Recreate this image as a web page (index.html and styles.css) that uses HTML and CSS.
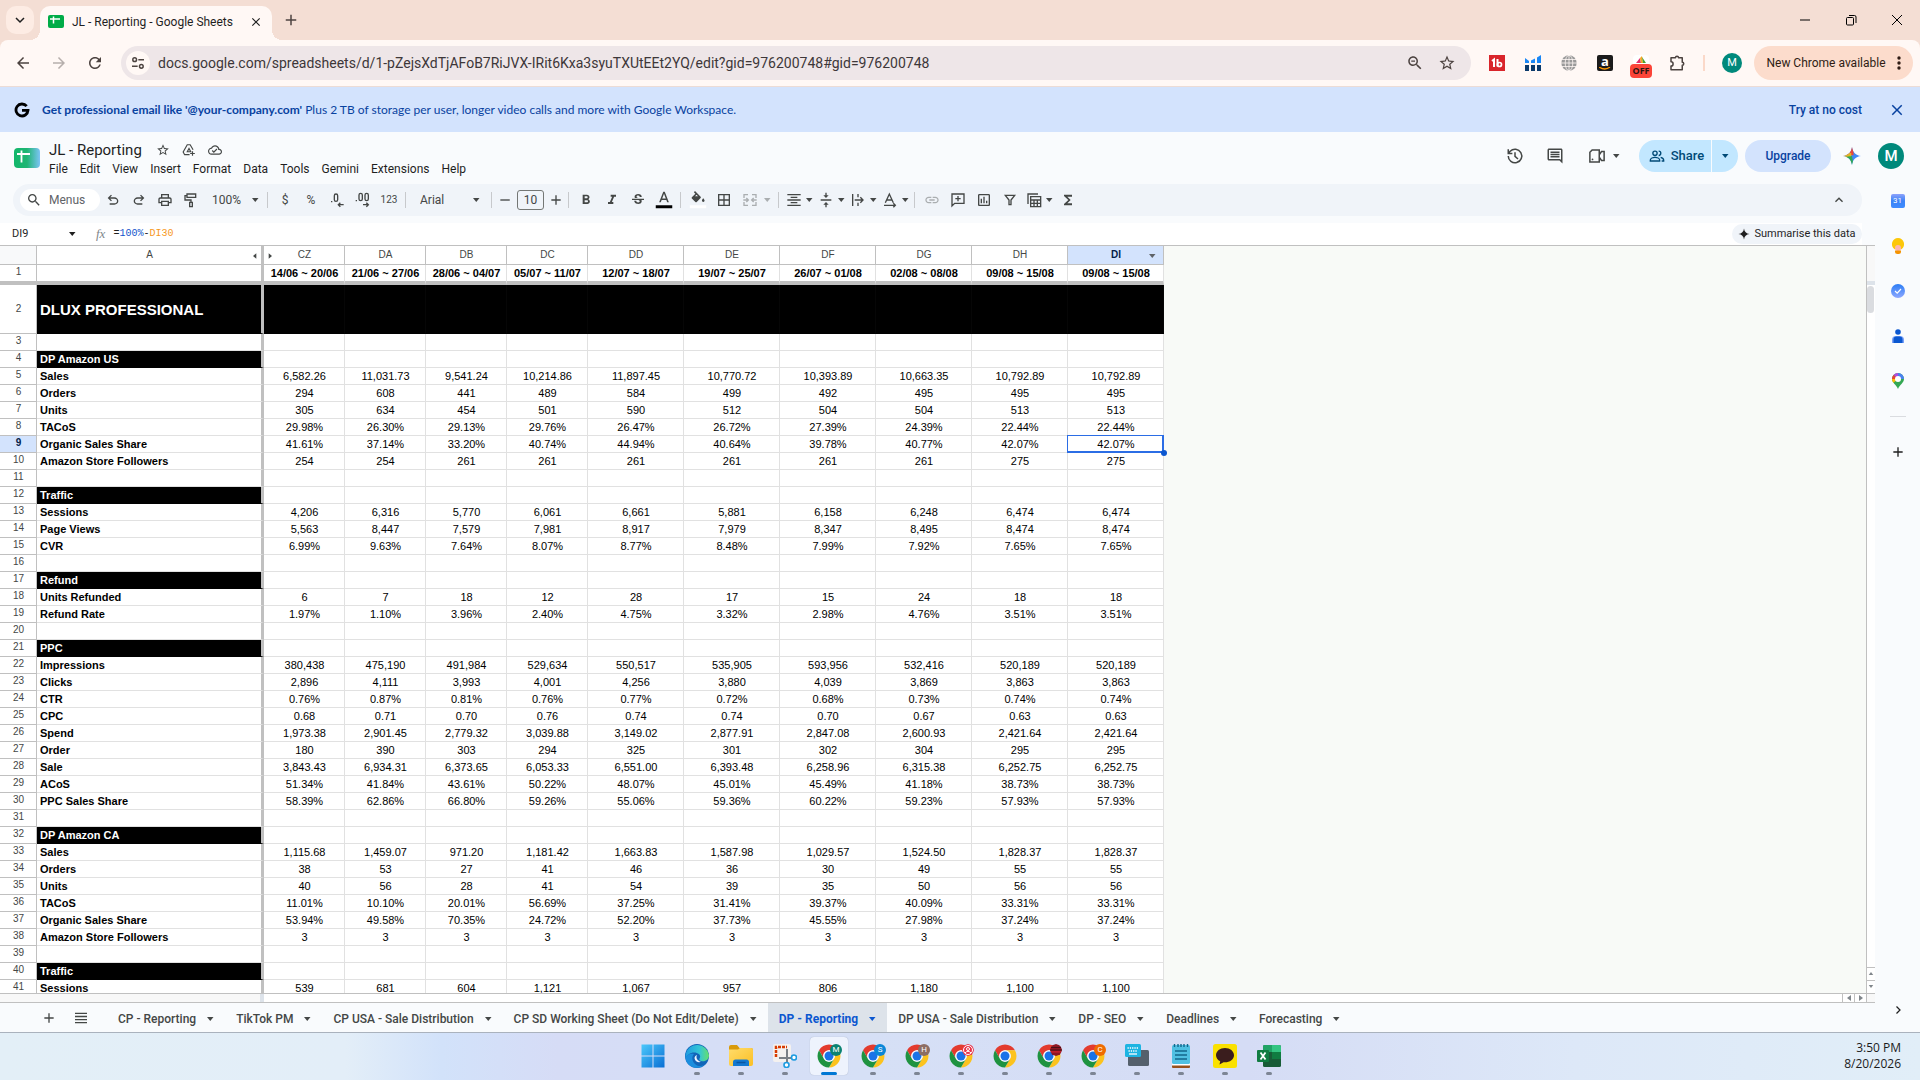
FILE: index.html
```html
<!DOCTYPE html>
<html lang="en">
<head>
<meta charset="utf-8">
<title>JL - Reporting - Google Sheets</title>
<link rel="stylesheet" href="styles.css">
</head>
<body>
<svg class="defs" aria-hidden="true">
  <defs>
    <linearGradient id="g-sheet" x1="0" x2="1"><stop offset="0" stop-color="#12b76a"/><stop offset=".5" stop-color="#1fb574"/><stop offset="1" stop-color="#7cc4f5"/></linearGradient>
    <linearGradient id="g-win" x1="0" y1="0" x2="1" y2="1"><stop offset="0" stop-color="#4cc8fb"/><stop offset="1" stop-color="#0a6fd4"/></linearGradient>
    <linearGradient id="g-edge" x1="0" y1="0" x2="1" y2="0"><stop offset="0" stop-color="#1f9be0"/><stop offset=".6" stop-color="#35c6d6"/><stop offset="1" stop-color="#67e06a"/></linearGradient>
    <linearGradient id="g-folder" x1="0" y1="0" x2="1" y2="1"><stop offset="0" stop-color="#ffdc6b"/><stop offset="1" stop-color="#fbbf24"/></linearGradient>
    <linearGradient id="g-blue" x1="0" y1="0" x2="0" y2="1"><stop offset="0" stop-color="#2b7df5"/><stop offset="1" stop-color="#8fa8ff"/></linearGradient>
    <linearGradient id="g-cal" x1="0" y1="0" x2="0" y2="1"><stop offset="0" stop-color="#8da2fb"/><stop offset=".5" stop-color="#3b82f6"/><stop offset="1" stop-color="#3f8cff"/></linearGradient>
  </defs>
  <symbol id="i-back" viewBox="0 0 24 24"><path d="M20 11H7.83l5.59-5.59L12 4l-8 8 8 8 1.41-1.41L7.83 13H20z"/></symbol>
  <symbol id="i-fwd" viewBox="0 0 24 24"><path d="M12 4l-1.41 1.41L16.17 11H4v2h12.17l-5.58 5.59L12 20l8-8z"/></symbol>
  <symbol id="i-reload" viewBox="0 0 24 24"><path d="M17.65 6.35C16.2 4.9 14.21 4 12 4c-4.42 0-7.99 3.58-7.99 8s3.57 8 7.99 8c3.73 0 6.84-2.55 7.73-6h-2.08c-.82 2.33-3.04 4-5.65 4-3.31 0-6-2.69-6-6s2.69-6 6-6c1.66 0 3.14.69 4.22 1.78L13 11h7V4z"/></symbol>
  <symbol id="i-star" viewBox="0 0 24 24"><path d="M22 9.24l-7.19-.62L12 2 9.19 8.63 2 9.24l5.46 4.73L5.82 21 12 17.27 18.18 21l-1.63-7.03zM12 15.4l-3.76 2.27 1-4.28-3.32-2.88 4.38-.38L12 6.1l1.71 4.04 4.38.38-3.32 2.88 1 4.28z"/></symbol>
  <symbol id="i-search" viewBox="0 0 24 24"><path d="M15.5 14h-.79l-.28-.27C15.41 12.59 16 11.11 16 9.5 16 5.91 13.09 3 9.5 3S3 5.91 3 9.5 5.91 16 9.5 16c1.61 0 3.09-.59 4.23-1.57l.27.28v.79l5 4.99L20.49 19zm-6 0C7.01 14 5 11.99 5 9.5S7.01 5 9.5 5 14 7.01 14 9.5 11.99 14 9.5 14z"/></symbol>
  <symbol id="i-zoomout" viewBox="0 0 24 24"><path d="M15.5 14h-.79l-.28-.27C15.41 12.59 16 11.11 16 9.5 16 5.91 13.09 3 9.5 3S3 5.91 3 9.5 5.91 16 9.5 16c1.61 0 3.09-.59 4.23-1.57l.27.28v.79l5 4.99L20.49 19zm-6 0C7.01 14 5 11.99 5 9.5S7.01 5 9.5 5 14 7.01 14 9.5 11.99 14 9.5 14zM7 8.700h5v1.600H7z"/></symbol>
  <symbol id="i-close" viewBox="0 0 24 24"><path d="M19 6.41L17.59 5 12 10.590 6.410 5 5 6.410 10.590 12 5 17.590 6.410 19 12 13.410 17.590 19 19 17.590 13.410 12z"/></symbol>
  <symbol id="i-plus" viewBox="0 0 24 24"><path d="M19 13h-6v6h-2v-6H5v-2h6V5h2v6h6z"/></symbol>
  <symbol id="i-minus" viewBox="0 0 24 24"><path d="M5 11h14v2H5z"/></symbol>
  <symbol id="i-menu" viewBox="0 0 24 24"><path d="M3 4h18v2H3zm0 4.700h18v2H3zm0 4.700h18v2H3zM3 18h18v2H3z"/></symbol>
  <symbol id="i-tune" viewBox="0 0 24 24"><g fill="none" stroke="currentColor" stroke-width="2.200"><circle cx="7" cy="7" r="2.800"/><path d="M12.500 7H21M3 17h8.500"/><circle cx="17" cy="17" r="2.800"/></g></symbol>
  <symbol id="i-undo" viewBox="0 0 24 24"><path d="M7 19v-2h7.100q1.575 0 2.737-1Q18 15 18 13.500T16.837 11Q15.675 10 14.100 10H7.800l2.600 2.600L9 14 4 9l5-5 1.400 1.400L7.800 8h6.300q2.425 0 4.163 1.575Q20 11.150 20 13.500t-1.737 3.925Q16.525 19 14.100 19Z"/></symbol>
  <symbol id="i-redo" viewBox="0 0 24 24"><path transform="translate(24 0) scale(-1 1)" d="M7 19v-2h7.100q1.575 0 2.737-1Q18 15 18 13.500T16.837 11Q15.675 10 14.100 10H7.800l2.600 2.600L9 14 4 9l5-5 1.400 1.400L7.800 8h6.300q2.425 0 4.163 1.575Q20 11.150 20 13.500t-1.737 3.925Q16.525 19 14.100 19Z"/></symbol>
  <symbol id="i-print" viewBox="0 0 24 24"><path fill-rule="evenodd" d="M19 8h-1V3H6v5H5c-1.660 0-3 1.340-3 3v6h4v4h12v-4h4v-6c0-1.660-1.340-3-3-3zM8 5h8v3H8V5zm8 12v2H8v-4h8v2zm2-2v-2H6v2H4v-4c0-.550.450-1 1-1h14c.550 0 1 .450 1 1v4h-2z"/></symbol>
  <symbol id="i-paint" viewBox="0 0 24 24"><g fill="none" stroke="currentColor" stroke-width="2"><path d="M6 3h13v5H6zM6 5.500H3V12h9v3.500M10 15.500h4V22h-4z"/></g></symbol>
  <symbol id="i-bold" viewBox="0 0 24 24"><path fill-rule="evenodd" d="M15.600 10.790c.970-.670 1.650-1.770 1.650-2.790 0-2.260-1.750-4-4-4H7v14h7.040c2.090 0 3.710-1.700 3.710-3.790 0-1.520-.860-2.820-2.150-3.420zM10 6.500h3c.830 0 1.500.670 1.500 1.500s-.670 1.500-1.500 1.500h-3v-3zm3.500 9H10v-3h3.500c.830 0 1.500.670 1.500 1.500s-.670 1.500-1.500 1.500z"/></symbol>
  <symbol id="i-italic" viewBox="0 0 24 24"><path d="M10 4v3h2.210l-3.420 8H6v3h8v-3h-2.210l3.420-8H18V4z"/></symbol>
  <symbol id="i-strike" viewBox="0 0 24 24"><path d="M6.850 7.080C6.850 4.370 9.450 3 12.240 3c1.640 0 3 .490 3.900 1.280.770.650 1.460 1.730 1.460 3.240h-3.010c0-.310-.050-.590-.150-.850-.290-.860-1.200-1.280-2.250-1.280-1.860 0-2.340 1.020-2.340 1.700 0 .480.250.880.740 1.210.380.250.770.480 1.410.700H7.390c-.210-.340-.540-.890-.540-1.920zM21 12v-2H3v2h9.620c1.150.450 1.960.750 1.960 1.970 0 1-.810 1.670-2.280 1.670-1.540 0-2.930-.540-2.930-2.510H6.400c0 .550.080 1.130.240 1.580.810 2.290 3.290 3.300 5.670 3.300 2.270 0 5.300-.890 5.300-4.050 0-.300-.010-1.160-.480-1.940H21z"/></symbol>
  <symbol id="i-color" viewBox="0 0 24 24"><path fill-rule="evenodd" d="M11 1L5.500 15h2.250l1.120-3h6.250l1.120 3h2.250L13 1h-2zm-1.380 9L12 3.670 14.380 10H9.620z"/><path fill="#000" d="M1 19h22v4H1z"/></symbol>
  <symbol id="i-fill" viewBox="0 0 24 24"><path fill-rule="evenodd" d="M15.500 7.500L8 0 6.500 1.500l2 2-4.700 4.700c-.500.500-.500 1.300 0 1.800l4.700 4.700c.500.500 1.300.500 1.800 0L15.500 9.300c.500-.500.500-1.300 0-1.800zM8 7l2-2 2 2zM19 9.500s-1.800 2-1.800 3.200a1.800 1.800 0 0 0 3.600 0c0-1.200-1.800-3.200-1.800-3.200z"/><path fill="#fff" d="M1 19h22v4H1z"/></symbol>
  <symbol id="i-borders" viewBox="0 0 24 24"><path fill-rule="evenodd" d="M3 3v18h18V3H3zm8 16H5v-6h6v6zm0-8H5V5h6v6zm8 8h-6v-6h6v6zm0-8h-6V5h6v6z"/></symbol>
  <symbol id="i-merge" viewBox="0 0 24 24"><g fill="none" stroke="currentColor" stroke-width="2"><path d="M9 4H3v5M15 4h6v5M9 20H3v-5M15 20h6v-5M2 12h7M15 12h7M6.500 9l3 3-3 3M17.500 9l-3 3 3 3"/></g></symbol>
  <symbol id="i-center" viewBox="0 0 24 24"><path d="M7 15v2h10v-2H7zm-5 6h20v-2H2v2zm0-8h20v-2H2v2zm5-6v2h10V7H7zM2 3v2h20V3H2z"/></symbol>
  <symbol id="i-middle" viewBox="0 0 24 24"><path d="M8 19h3v4h2v-4h3l-4-4zm8-14h-3V1h-2v4H8l4 4zM4 11v2h16v-2z"/></symbol>
  <symbol id="i-wrap" viewBox="0 0 24 24"><g fill="none" stroke="currentColor" stroke-width="2"><path d="M4 3v18M12 3v5M12 16v5M7 12h12M15.500 8l4 4-4 4"/></g></symbol>
  <symbol id="i-rotate" viewBox="0 0 24 24"><g fill="none" stroke="currentColor" stroke-width="2"><path d="M5 16l6-13 6 13M7.500 12h7M3 20h17M17 17l3 3-3 3"/></g></symbol>
  <symbol id="i-link" viewBox="0 0 24 24"><path d="M3.900 12c0-1.710 1.390-3.100 3.100-3.100h4V7H7c-2.760 0-5 2.240-5 5s2.240 5 5 5h4v-1.900H7c-1.710 0-3.100-1.390-3.100-3.100zM8 13h8v-2H8zm9-6h-4v1.900h4c1.710 0 3.100 1.390 3.100 3.100s-1.390 3.100-3.100 3.100h-4V17h4c2.760 0 5-2.240 5-5s-2.240-5-5-5z"/></symbol>
  <symbol id="i-addcomment" viewBox="0 0 24 24"><path fill="none" stroke="currentColor" stroke-width="2" d="M3 21V3h18v14H7zM12 6v8M8 10h8"/></symbol>
  <symbol id="i-chart" viewBox="0 0 24 24"><path fill-rule="evenodd" d="M19 3H5c-1.100 0-2 .900-2 2v14c0 1.100.900 2 2 2h14c1.100 0 2-.900 2-2V5c0-1.100-.900-2-2-2zm0 16H5V5h14v14zM7 10h2v7H7zm4-3h2v10h-2zm4 6h2v4h-2z"/></symbol>
  <symbol id="i-filter" viewBox="0 0 24 24"><path fill="none" stroke="currentColor" stroke-width="2" d="M5 5h14l-5.500 7v7h-3v-7z"/></symbol>
  <symbol id="i-views" viewBox="0 0 24 24"><g fill="none" stroke="currentColor" stroke-width="2"><path d="M3 18V3h15"/><path d="M7 7h15v15H7zM7 12h15M7 17h15M12 12v10M17 12v10"/></g></symbol>
  <symbol id="i-sum" viewBox="0 0 24 24"><path d="M18 4H6v2l6.500 6L6 18v2h12v-3h-7l5-5-5-5h7z"/></symbol>
  <symbol id="i-up" viewBox="0 0 24 24"><path d="M12 8l-6 6 1.410 1.410L12 10.830l4.590 4.580L18 14z"/></symbol>
  <symbol id="i-down" viewBox="0 0 24 24"><path fill="none" stroke="currentColor" stroke-width="3" d="M4 8l8 8 8-8"/></symbol>
  <symbol id="i-right" viewBox="0 0 24 24"><path fill="none" stroke="currentColor" stroke-width="2.500" d="M9 5l7 7-7 7"/></symbol>
  <symbol id="i-drop" viewBox="0 0 8 8"><path d="M1 2h6.500L4.250 6z"/></symbol>
  <symbol id="i-dec0" viewBox="0 0 24 24"><g fill="none" stroke="currentColor" stroke-width="2"><rect x="8" y="3" width="5" height="11" rx="2.500"/><path d="M3 14.500h2M22 19h-8M17 16l-3 3 3 3"/></g></symbol>
  <symbol id="i-dec00" viewBox="0 0 24 24"><g fill="none" stroke="currentColor" stroke-width="2"><rect x="6" y="2" width="5" height="11" rx="2.500"/><rect x="15" y="2" width="5" height="11" rx="2.500"/><path d="M1 13h2M12 19h8M17 16l3 3-3 3"/></g></symbol>
  <symbol id="i-history" viewBox="0 0 24 24"><path fill="none" stroke="currentColor" stroke-width="2" d="M3 12a9 9 0 1 0 2.600-6.300L3 8.500M3 3v5.500h5.500M12 7v5.500l4 3.500"/></symbol>
  <symbol id="i-comment" viewBox="0 0 24 24"><path fill-rule="evenodd" d="M21.990 4c0-1.100-.890-2-1.990-2H4c-1.100 0-2 .900-2 2v12c0 1.100.900 2 2 2h14l4 4zM20 4v13.170L18.830 16H4V4zM6 12h12v2H6zm0-3h12v2H6zm0-3h12v2H6z"/></symbol>
  <symbol id="i-video" viewBox="0 0 24 24"><path fill="none" stroke="currentColor" stroke-width="2" d="M5.500 4H15v16H2.500V7zM15 10.500l3-4.500h3.500v12H18l-3-4.500"/><circle cx="6" cy="16.500" r="1.200"/></symbol>
  <symbol id="i-people" viewBox="0 0 24 24"><g fill="none" stroke="currentColor" stroke-width="2"><circle cx="9" cy="8" r="3.200"/><path d="M2 19.500v-1.500c0-2.500 4-4 7-4s7 1.500 7 4v1.500zM14.500 4.800a3.200 3.200 0 0 1 0 6.400M17.500 14.200c2.500.800 4.500 2 4.500 3.800v1.500h-3"/></g></symbol>
  <symbol id="i-drive" viewBox="0 0 24 24"><path fill="none" stroke="currentColor" stroke-width="2" d="M13 20H4.500L2 15.500 9 3h5l5 8.500M9 15l3-5.500 3 5.500zM18 14v8M14 18h8"/></symbol>
  <symbol id="i-cloud" viewBox="0 0 24 24"><path fill-rule="evenodd" d="M19.350 10.040C18.670 6.590 15.640 4 12 4 9.110 4 6.600 5.640 5.350 8.040 2.340 8.360 0 10.910 0 14c0 3.310 2.690 6 6 6h13c2.760 0 5-2.240 5-5 0-2.640-2.050-4.780-4.650-4.960zM19 18H6c-2.210 0-4-1.790-4-4s1.790-4 4-4h.710C7.370 7.690 9.480 6 12 6c3.040 0 5.500 2.460 5.500 5.500v.500H19c1.660 0 3 1.340 3 3s-1.340 3-3 3zm-9-3.820l-2.090-2.090L6.500 13.500 10 17l6.010-6.010-1.410-1.410z"/></symbol>
  <symbol id="i-puzzle" viewBox="0 0 24 24"><path fill="none" stroke="currentColor" stroke-width="2" stroke-linejoin="round" d="M4 5h6a2 2 0 0 1 4 0h5v6a2 2 0 0 1 0 4v6H4v-5a2.800 2.800 0 0 0 0-5.600z"/></symbol>
  <symbol id="i-spark" viewBox="0 0 24 24"><path d="M12 1c.800 6.500 4.500 10.200 11 11-6.500.800-10.200 4.500-11 11-.800-6.500-4.500-10.200-11-11 6.500-.800 10.200-4.500 11-11z"/></symbol>
  <symbol id="i-g" viewBox="0 0 24 24"><path fill="none" stroke="#000" stroke-width="4.200" d="M19 6.300A9 9 0 1 0 21 12.500h-9"/></symbol>
  <symbol id="i-chrome" viewBox="0 0 48 48">
    <path fill="#e33b2e" d="M4.100 12.500A23 23 0 0 1 43.900 12.500L24 12.500A11.500 11.500 0 0 0 14.040 29.750Z"/>
    <path fill="#fcc31e" d="M43.900 12.500A23 23 0 0 1 24 47L33.960 29.750A11.500 11.500 0 0 0 24 12.500Z"/>
    <path fill="#1f9340" d="M24 47A23 23 0 0 1 4.100 12.500L14.040 29.750A11.500 11.500 0 0 0 33.960 29.750Z"/>
    <circle cx="24" cy="24" r="11.500" fill="#fff"/><circle cx="24" cy="24" r="9" fill="#1a73e8"/>
  </symbol>
</svg>

<header class="browser">
  <div class="tabstrip">
    <button class="tab-search" aria-label="Search tabs"><svg class="s12"><use href="#i-down"/></svg></button>
    <div class="browser-tab">
      <svg class="s16" viewBox="0 0 16 16"><rect y="1" width="16" height="13" rx="2" fill="#00ac47"/><path d="M2 5h10M5.500 2.500v7" stroke="#fff" stroke-width="1.500"/></svg>
      <span class="browser-title">JL - Reporting - Google Sheets</span>
      <button class="tab-close" aria-label="Close tab"><svg class="s14"><use href="#i-close"/></svg></button>
    </div>
    <button class="new-tab" aria-label="New tab"><svg class="s18"><use href="#i-plus"/></svg></button>
    <div class="window-controls">
      <button aria-label="Minimize"><svg class="s12" viewBox="0 0 12 12"><path d="M1 6h10" stroke="#000"/></svg></button>
      <button aria-label="Restore"><svg class="s12 line" viewBox="0 0 12 12" stroke="#000"><rect x="1.500" y="3.500" width="7" height="7.500" rx="1"/><path d="M4 1.500h5.500a1.500 1.500 0 0 1 1.500 1.500v6"/></svg></button>
      <button aria-label="Close"><svg class="s12" viewBox="0 0 12 12"><path d="M1 1l10 10M11 1L1 11" stroke="#000"/></svg></button>
    </div>
  </div>
  <div class="navbar">
    <button class="nav-btn" aria-label="Back"><svg class="s18"><use href="#i-back"/></svg></button>
    <button class="nav-btn faded" aria-label="Forward"><svg class="s18"><use href="#i-fwd"/></svg></button>
    <button class="nav-btn" aria-label="Reload"><svg class="s18"><use href="#i-reload"/></svg></button>
    <div class="omnibox">
      <button class="site-info" aria-label="Site information"><svg class="s16"><use href="#i-tune"/></svg></button>
      <input class="url" aria-label="Address" value="docs.google.com/spreadsheets/d/1-pZejsXdTjAFoB7RiJVX-IRit6Kxa3syuTXUtEEt2YQ/edit?gid=976200748#gid=976200748">
      <button class="omni-btn" aria-label="Zoom"><svg class="s18"><use href="#i-zoomout"/></svg></button>
      <button class="omni-btn" aria-label="Bookmark"><svg class="s18"><use href="#i-star"/></svg></button>
    </div>
    <div class="extensions">
      <button aria-label="Extension 1b"><svg class="s16 line" viewBox="0 0 16 16"><rect width="16" height="16" fill="#d9252b"/><path d="M3 6l2-1.500V12M8.500 4v7.500" stroke="#fff" stroke-width="2"/><circle cx="10.500" cy="9.500" r="2" stroke="#fff" stroke-width="1.700"/></svg></button>
      <button aria-label="Analytics extension"><svg class="s16" viewBox="0 0 16 16"><path fill="#1a87f5" d="M0 3l4 3v2H0zM6 5.500l4-2V8H6zM12 2.500L16 0v8h-4z"/><path fill="#0b3a6b" d="M0 10h4v6H0zM6 10h4v6H6zM12 10h4v6h-4z"/></svg></button>
      <button aria-label="Globe extension"><svg class="s16 line" viewBox="0 0 16 16" stroke="#fff8f5" stroke-width=".8"><circle cx="8" cy="8" r="7.700" fill="#9a9a9a" stroke="none"/><ellipse cx="8" cy="8" rx="3.800" ry="7.700"/><path d="M8 0v16M0 8h16M1 4.500h14M1 11.500h14"/></svg></button>
      <button aria-label="Amazon extension" class="amz"><span>a</span><svg viewBox="0 0 12 3"><path d="M0 0q6 4 11 0" fill="none" stroke="#f90" stroke-width="1.300"/></svg></button>
      <button aria-label="Helper extension" class="helper"><svg class="s16" viewBox="0 0 16 16"><rect width="16" height="12" rx="4" fill="#fff"/><path d="M3 8l4-5 1 5z" fill="#e1306c"/><path d="M7 3l2-2 1 7H8z" fill="#f5a623"/><path d="M9 2l4 6h-3z" fill="#4a9e2f"/></svg><span class="off">OFF</span></button>
      <button aria-label="Extensions"><svg class="s18"><use href="#i-puzzle"/></svg></button>
    </div>
    <span class="nav-sep"></span>
    <button class="avatar small" aria-label="Profile">M</button>
    <button class="update">New Chrome available <svg class="dots" viewBox="0 0 4 14"><circle cx="2" cy="2" r="1.700"/><circle cx="2" cy="7" r="1.700"/><circle cx="2" cy="12" r="1.700"/></svg></button>
  </div>
</header>

<aside class="promo">
  <svg class="s16"><use href="#i-g"/></svg>
  <p><b>Get professional email like '@your-company.com'</b> Plus 2 TB of storage per user, longer video calls and more with Google Workspace.</p>
  <a href="#trial">Try at no cost</a>
  <button aria-label="Dismiss"><svg class="s18"><use href="#i-close"/></svg></button>
</aside>

<div class="dochead">
  <svg class="logo" viewBox="0 0 26 20"><rect width="26" height="20" rx="4" fill="url(#g-sheet)"/><path d="M3 6h13M7.500 2.500v12" stroke="#fff" stroke-width="1.800"/></svg>
  <div class="doc-info">
    <div class="title-row">
      <h1>JL - Reporting</h1>
      <button aria-label="Star"><svg class="s14"><use href="#i-star"/></svg></button>
      <button aria-label="Add to Drive"><svg class="s14"><use href="#i-drive"/></svg></button>
      <button aria-label="Saved"><svg class="s14"><use href="#i-cloud"/></svg></button>
    </div>
    <nav class="menus"><button>File</button><button>Edit</button><button>View</button><button>Insert</button><button>Format</button><button>Data</button><button>Tools</button><button>Gemini</button><button>Extensions</button><button>Help</button></nav>
  </div>
  <div class="doc-actions">
    <button class="act" aria-label="Version history"><svg class="s18"><use href="#i-history"/></svg></button>
    <button class="act" aria-label="Comments"><svg class="s18"><use href="#i-comment"/></svg></button>
    <button class="act meet" aria-label="Meet"><svg class="s18"><use href="#i-video"/></svg><svg class="s8"><use href="#i-drop"/></svg></button>
    <div class="share"><button class="share-main"><svg class="s16"><use href="#i-people"/></svg>Share</button><button class="share-more" aria-label="Share options"><svg class="s8"><use href="#i-drop"/></svg></button></div>
    <button class="upgrade">Upgrade</button>
    <button class="gem" aria-label="Gemini"><svg class="spark-box" viewBox="0 0 24 24"><defs><clipPath id="spark-clip"><path d="M12 0c.900 7 5 11.100 12 12-7 .900-11.100 5-12 12-.900-7-5-11.100-12-12 7-.900 11.100-5 12-12z"/></clipPath></defs><g clip-path="url(#spark-clip)"><path fill="#3f87f5" d="M0 0h24v24H0z"/><path fill="#e5483b" d="M0 0h14v11H0z"/><path fill="#e3b325" d="M0 8h11v6H0z"/><path fill="#30a853" d="M4 13l8-1 2 12H4z"/></g></svg></button>
    <button class="avatar large" aria-label="Account">M</button>
  </div>
</div>

<div class="workspace">
  <main class="editor">
    <div class="toolbar">
      <label class="finder"><svg class="s16"><use href="#i-search"/></svg><input placeholder="Menus" aria-label="Menus"></label>
      <button aria-label="Undo"><svg class="s16"><use href="#i-undo"/></svg></button>
      <button aria-label="Redo"><svg class="s16"><use href="#i-redo"/></svg></button>
      <button aria-label="Print"><svg class="s16"><use href="#i-print"/></svg></button>
      <button aria-label="Paint format"><svg class="s16"><use href="#i-paint"/></svg></button>
      <label class="pick zoom"><select aria-label="Zoom"><option>100%</option></select><svg class="s8"><use href="#i-drop"/></svg></label>
      <i class="sep"></i>
      <button aria-label="Currency">$</button>
      <button aria-label="Percent">%</button>
      <button aria-label="Fewer decimals"><svg class="s16"><use href="#i-dec0"/></svg></button>
      <button aria-label="More decimals"><svg class="s16"><use href="#i-dec00"/></svg></button>
      <button aria-label="Formats" class="digits">123</button>
      <i class="sep"></i>
      <label class="pick font"><select aria-label="Font"><option>Arial</option></select><svg class="s8"><use href="#i-drop"/></svg></label>
      <i class="sep"></i>
      <button class="step" aria-label="Smaller"><svg class="s16"><use href="#i-minus"/></svg></button>
      <input class="size" aria-label="Font size" value="10">
      <button class="step" aria-label="Larger"><svg class="s16"><use href="#i-plus"/></svg></button>
      <i class="sep"></i>
      <button aria-label="Bold"><svg class="s16"><use href="#i-bold"/></svg></button>
      <button aria-label="Italic"><svg class="s16"><use href="#i-italic"/></svg></button>
      <button aria-label="Strikethrough"><svg class="s16"><use href="#i-strike"/></svg></button>
      <button aria-label="Text colour"><svg class="s18"><use href="#i-color"/></svg></button>
      <i class="sep"></i>
      <button aria-label="Fill colour"><svg class="s18"><use href="#i-fill"/></svg></button>
      <button aria-label="Borders"><svg class="s16"><use href="#i-borders"/></svg></button>
      <button class="merge faded" aria-label="Merge cells"><svg class="s16"><use href="#i-merge"/></svg><svg class="s8"><use href="#i-drop"/></svg></button>
      <i class="sep"></i>
      <button class="combo" aria-label="Horizontal align"><svg class="s16"><use href="#i-center"/></svg><svg class="s8"><use href="#i-drop"/></svg></button>
      <button class="combo" aria-label="Vertical align"><svg class="s16"><use href="#i-middle"/></svg><svg class="s8"><use href="#i-drop"/></svg></button>
      <button class="combo" aria-label="Wrapping"><svg class="s16"><use href="#i-wrap"/></svg><svg class="s8"><use href="#i-drop"/></svg></button>
      <button class="combo" aria-label="Rotation"><svg class="s16"><use href="#i-rotate"/></svg><svg class="s8"><use href="#i-drop"/></svg></button>
      <i class="sep"></i>
      <button class="faded" aria-label="Insert link"><svg class="s16"><use href="#i-link"/></svg></button>
      <button aria-label="Insert comment"><svg class="s16"><use href="#i-addcomment"/></svg></button>
      <button aria-label="Insert chart"><svg class="s16"><use href="#i-chart"/></svg></button>
      <button aria-label="Filter"><svg class="s16"><use href="#i-filter"/></svg></button>
      <button class="combo" aria-label="Table views"><svg class="s16"><use href="#i-views"/></svg><svg class="s8"><use href="#i-drop"/></svg></button>
      <button aria-label="Functions"><svg class="s16"><use href="#i-sum"/></svg></button>
      <button class="collapse" aria-label="Hide the menus"><svg class="s16"><use href="#i-up"/></svg></button>
    </div>

    <div class="formula-bar">
      <input class="namebox" aria-label="Name box" value="DI9">
      <svg class="s8"><use href="#i-drop"/></svg>
      <span class="fx">fx</span>
      <div class="formula" role="textbox" aria-label="Formula" contenteditable="true" spellcheck="false">=<span class="num">100%</span>-<span class="ref">DI30</span></div>
      <button class="summarise"><svg class="s12"><use href="#i-spark"/></svg>Summarise this data</button>
    </div>

    <div class="sheet">
      <div class="viewport">
        <table class="grid">
          <colgroup><col class="c-num"><col class="c-a"><col class="c-s" span="4"><col class="c-l" span="6"></colgroup>
          <thead><tr><th class="corner"><th class="hide-left">A<svg class="s6" viewBox="0 0 6 8"><path d="M5 0v8L0 4z"/></svg><th class="hide-right"><svg class="s6" viewBox="0 0 6 8"><path d="M1 0v8l5-4z"/></svg>CZ<th>DA<th>DB<th>DC<th>DD<th>DE<th>DF<th>DG<th>DH<th class="on">DI<svg class="s8"><use href="#i-drop"/></svg></thead>
          <tbody>
            <tr class="frozen"><th>1<td><td>14/06 ~ 20/06<td>21/06 ~ 27/06<td>28/06 ~ 04/07<td>05/07 ~ 11/07<td>12/07 ~ 18/07<td>19/07 ~ 25/07<td>26/07 ~ 01/08<td>02/08 ~ 08/08<td>09/08 ~ 15/08<td>09/08 ~ 15/08
            <tr class="brand"><th>2<td>DLUX PROFESSIONAL<td><td><td><td><td><td><td><td><td><td>
            <tr><th>3<td><td><td><td><td><td><td><td><td><td><td>
            <tr class="section"><th>4<td>DP Amazon US<td><td><td><td><td><td><td><td><td><td>
            <tr><th>5<td>Sales<td>6,582.26<td>11,031.73<td>9,541.24<td>10,214.86<td>11,897.45<td>10,770.72<td>10,393.89<td>10,663.35<td>10,792.89<td>10,792.89
            <tr><th>6<td>Orders<td>294<td>608<td>441<td>489<td>584<td>499<td>492<td>495<td>495<td>495
            <tr><th>7<td>Units<td>305<td>634<td>454<td>501<td>590<td>512<td>504<td>504<td>513<td>513
            <tr><th>8<td>TACoS<td>29.98%<td>26.30%<td>29.13%<td>29.76%<td>26.47%<td>26.72%<td>27.39%<td>24.39%<td>22.44%<td>22.44%
            <tr><th class="on">9<td>Organic Sales Share<td>41.61%<td>37.14%<td>33.20%<td>40.74%<td>44.94%<td>40.64%<td>39.78%<td>40.77%<td>42.07%<td class="active">42.07%
            <tr><th>10<td>Amazon Store Followers<td>254<td>254<td>261<td>261<td>261<td>261<td>261<td>261<td>275<td>275
            <tr><th>11<td><td><td><td><td><td><td><td><td><td><td>
            <tr class="section"><th>12<td>Traffic<td><td><td><td><td><td><td><td><td><td>
            <tr><th>13<td>Sessions<td>4,206<td>6,316<td>5,770<td>6,061<td>6,661<td>5,881<td>6,158<td>6,248<td>6,474<td>6,474
            <tr><th>14<td>Page Views<td>5,563<td>8,447<td>7,579<td>7,981<td>8,917<td>7,979<td>8,347<td>8,495<td>8,474<td>8,474
            <tr><th>15<td>CVR<td>6.99%<td>9.63%<td>7.64%<td>8.07%<td>8.77%<td>8.48%<td>7.99%<td>7.92%<td>7.65%<td>7.65%
            <tr><th>16<td><td><td><td><td><td><td><td><td><td><td>
            <tr class="section"><th>17<td>Refund<td><td><td><td><td><td><td><td><td><td>
            <tr><th>18<td>Units Refunded<td>6<td>7<td>18<td>12<td>28<td>17<td>15<td>24<td>18<td>18
            <tr><th>19<td>Refund Rate<td>1.97%<td>1.10%<td>3.96%<td>2.40%<td>4.75%<td>3.32%<td>2.98%<td>4.76%<td>3.51%<td>3.51%
            <tr><th>20<td><td><td><td><td><td><td><td><td><td><td>
            <tr class="section"><th>21<td>PPC<td><td><td><td><td><td><td><td><td><td>
            <tr><th>22<td>Impressions<td>380,438<td>475,190<td>491,984<td>529,634<td>550,517<td>535,905<td>593,956<td>532,416<td>520,189<td>520,189
            <tr><th>23<td>Clicks<td>2,896<td>4,111<td>3,993<td>4,001<td>4,256<td>3,880<td>4,039<td>3,869<td>3,863<td>3,863
            <tr><th>24<td>CTR<td>0.76%<td>0.87%<td>0.81%<td>0.76%<td>0.77%<td>0.72%<td>0.68%<td>0.73%<td>0.74%<td>0.74%
            <tr><th>25<td>CPC<td>0.68<td>0.71<td>0.70<td>0.76<td>0.74<td>0.74<td>0.70<td>0.67<td>0.63<td>0.63
            <tr><th>26<td>Spend<td>1,973.38<td>2,901.45<td>2,779.32<td>3,039.88<td>3,149.02<td>2,877.91<td>2,847.08<td>2,600.93<td>2,421.64<td>2,421.64
            <tr><th>27<td>Order<td>180<td>390<td>303<td>294<td>325<td>301<td>302<td>304<td>295<td>295
            <tr><th>28<td>Sale<td>3,843.43<td>6,934.31<td>6,373.65<td>6,053.33<td>6,551.00<td>6,393.48<td>6,258.96<td>6,315.38<td>6,252.75<td>6,252.75
            <tr><th>29<td>ACoS<td>51.34%<td>41.84%<td>43.61%<td>50.22%<td>48.07%<td>45.01%<td>45.49%<td>41.18%<td>38.73%<td>38.73%
            <tr><th>30<td>PPC Sales Share<td>58.39%<td>62.86%<td>66.80%<td>59.26%<td>55.06%<td>59.36%<td>60.22%<td>59.23%<td>57.93%<td>57.93%
            <tr><th>31<td><td><td><td><td><td><td><td><td><td><td>
            <tr class="section"><th>32<td>DP Amazon CA<td><td><td><td><td><td><td><td><td><td>
            <tr><th>33<td>Sales<td>1,115.68<td>1,459.07<td>971.20<td>1,181.42<td>1,663.83<td>1,587.98<td>1,029.57<td>1,524.50<td>1,828.37<td>1,828.37
            <tr><th>34<td>Orders<td>38<td>53<td>27<td>41<td>46<td>36<td>30<td>49<td>55<td>55
            <tr><th>35<td>Units<td>40<td>56<td>28<td>41<td>54<td>39<td>35<td>50<td>56<td>56
            <tr><th>36<td>TACoS<td>11.01%<td>10.10%<td>20.01%<td>56.69%<td>37.25%<td>31.41%<td>39.37%<td>40.09%<td>33.31%<td>33.31%
            <tr><th>37<td>Organic Sales Share<td>53.94%<td>49.58%<td>70.35%<td>24.72%<td>52.20%<td>37.73%<td>45.55%<td>27.98%<td>37.24%<td>37.24%
            <tr><th>38<td>Amazon Store Followers<td>3<td>3<td>3<td>3<td>3<td>3<td>3<td>3<td>3<td>3
            <tr><th>39<td><td><td><td><td><td><td><td><td><td><td>
            <tr class="section"><th>40<td>Traffic<td><td><td><td><td><td><td><td><td><td>
            <tr><th>41<td>Sessions<td>539<td>681<td>604<td>1,121<td>1,067<td>957<td>806<td>1,180<td>1,100<td>1,100
          </tbody>
        </table>
      </div>
      <div class="vscroll"><div class="vfrozen"></div><div class="vthumb"></div><div class="varrows"><svg viewBox="0 0 6 4"><path d="M0 4h6L3 0z"/></svg><svg viewBox="0 0 6 4"><path d="M0 0h6L3 4z"/></svg></div></div>
      <div class="hscroll"><div class="hfrozen"></div><div class="htrack"></div><div class="harrows"><svg viewBox="0 0 4 6"><path d="M4 0v6L0 3z"/></svg><svg viewBox="0 0 4 6"><path d="M0 0v6l4-3z"/></svg></div></div>
      <div class="scroll-corner"></div>
    </div>
    <nav class="sheet-tabs">
      <button class="tool" aria-label="Add sheet"><svg class="s16"><use href="#i-plus"/></svg></button>
      <button class="tool" aria-label="All sheets"><svg class="s16"><use href="#i-menu"/></svg></button>
      <div class="tabs">
        <button>CP - Reporting<svg class="s8"><use href="#i-drop"/></svg></button>
        <button>TikTok PM<svg class="s8"><use href="#i-drop"/></svg></button>
        <button>CP USA - Sale Distribution<svg class="s8"><use href="#i-drop"/></svg></button>
        <button>CP SD Working Sheet (Do Not Edit/Delete)<svg class="s8"><use href="#i-drop"/></svg></button>
        <button class="current">DP - Reporting<svg class="s8"><use href="#i-drop"/></svg></button>
        <button>DP USA - Sale Distribution<svg class="s8"><use href="#i-drop"/></svg></button>
        <button>DP - SEO<svg class="s8"><use href="#i-drop"/></svg></button>
        <button>Deadlines<svg class="s8"><use href="#i-drop"/></svg></button>
        <button>Forecasting<svg class="s8"><use href="#i-drop"/></svg></button>
      </div>
    </nav>
  </main>

  <aside class="side-panel">
    <button aria-label="Calendar" class="cal"><svg class="s14" viewBox="0 0 14 14"><rect width="14" height="14" rx="2" fill="url(#g-cal)"/></svg><span>31</span></button>
    <button aria-label="Keep"><svg class="s16" viewBox="0 0 16 16"><path d="M8 0a6.200 6.200 0 0 0-3.500 11.200h7A6.200 6.200 0 0 0 8 0z" fill="#fcc70a"/><circle cx="8" cy="10" r="3" fill="#fcb5b0"/><path d="M5 12.500h6v1A2.500 2.500 0 0 1 8.500 16h-1A2.500 2.500 0 0 1 5 13.500z" fill="#f59300"/></svg></button>
    <button aria-label="Tasks"><svg class="s14" viewBox="0 0 14 14"><circle cx="7" cy="7" r="7" fill="url(#g-blue)"/><path d="M4 7l2.200 2.200L10 5" fill="none" stroke="#fff" stroke-width="1.200"/></svg></button>
    <button aria-label="Contacts"><svg class="s14" viewBox="0 0 14 14"><circle cx="7" cy="3" r="2.800" fill="#0b57d0"/><path d="M1 14v-3a4 4 0 0 1 4-4h4a4 4 0 0 1 4 4v3z" fill="#7aa0f7"/><path d="M2.500 14v-3.500a3 3 0 0 1 3-3h3a3 3 0 0 1 3 3V14z" fill="#0b57d0"/></svg></button>
    <button aria-label="Maps"><svg class="s16" viewBox="0 0 16 16"><path d="M8 0a6 6 0 0 0-6 6c0 4 4 5 6 10 2-5 6-6 6-10a6 6 0 0 0-6-6z" fill="#34a853"/><path d="M8 0a6 6 0 0 1 6 6l-6 0z" fill="#4a80f0"/><path d="M8 0a6 6 0 0 0-4.500 2L8 6z" fill="#b04be0"/><path d="M3.500 2A6 6 0 0 0 2 6l6 0z" fill="#ea4335"/><path d="M2 6c0 1.500.500 2.600 1.400 3.700L8 6z" fill="#fbbc04"/><circle cx="8" cy="6" r="3" fill="#fff"/></svg></button>
    <hr>
    <button aria-label="Get add-ons"><svg class="s16"><use href="#i-plus"/></svg></button>
    <button class="panel-toggle" aria-label="Hide side panel"><svg class="s12"><use href="#i-right"/></svg></button>
  </aside>
</div>

<footer class="taskbar">
  <div class="apps">
    <button aria-label="Start"><svg class="s24" viewBox="0 0 24 24"><path fill="url(#g-win)" d="M.500.500h11v11H.500zM12.500.500h11v11h-11zM.500 12.500h11v11H.500zM12.500 12.500h11v11h-11z"/></svg></button>
    <button class="open" aria-label="Edge"><svg class="s24" viewBox="0 0 24 24"><circle cx="12" cy="12" r="12" fill="#1265b8"/><path d="M.500 10A12 12 0 0 1 24 11c0 5-4 7-8 6-2-.500-2-2-1-3.500C16 11 13 8.500 9 8.500S2 11 .500 15z" fill="url(#g-edge)"/><path d="M9 10c-3 3-2 9 3 11.500 4 1.500 7 0 9-2.500A12 12 0 0 1 9 23.500C3 22 0 17 1 13c1.500-3 5-4 8-3z" fill="#1b8ede"/><path d="M12 11c-1.500 3 .500 6 4 6.800-2 1-6 .200-6.500-3.500 0-1.500 1-3 2.500-3.300z" fill="#eef5ff"/></svg></button>
    <button class="open" aria-label="File Explorer"><svg class="s24" viewBox="0 0 24 24"><path d="M0 3a2 2 0 0 1 2-2h6l2.500 3H22a2 2 0 0 1 2 2v3H0z" fill="#d99a0b"/><path d="M0 5.500h9L11 4h11a2 2 0 0 1 2 2v14a2 2 0 0 1-2 2H2a2 2 0 0 1-2-2z" fill="url(#g-folder)"/><path d="M4 22v-4a2.500 2.500 0 0 1 2.500-2.500h11A2.500 2.500 0 0 1 20 18v4z" fill="#1378cf"/><path d="M7.500 18.500h9" stroke="#0b56a0" stroke-width="1.500"/></svg></button>
    <button class="open" aria-label="Snipping Tool"><svg class="s24" viewBox="0 0 24 24"><rect width="18" height="18" rx="2" fill="#f4f1ef"/><path d="M3 13V3h11" fill="none" stroke="#d83b01" stroke-width="2.500" stroke-dasharray="3 1"/><path d="M14 5v14M6 14h12" stroke="#7a7f85" stroke-width="2"/><circle cx="21" cy="13.500" r="2.500" fill="#fff" stroke="#1c9be0" stroke-width="1.600"/><circle cx="13.500" cy="21" r="2.500" fill="#fff" stroke="#1c9be0" stroke-width="1.600"/></svg></button>
    <button class="open focused" aria-label="Chrome M"><svg class="s24"><use href="#i-chrome"/></svg><span class="badge teal">M</span></button>
    <button class="open" aria-label="Chrome S"><svg class="s24"><use href="#i-chrome"/></svg><span class="badge blue">S</span></button>
    <button class="open" aria-label="Chrome H"><svg class="s24"><use href="#i-chrome"/></svg><span class="badge brown">H</span></button>
    <button class="open" aria-label="Chrome guest"><svg class="s24"><use href="#i-chrome"/></svg><svg class="badge" viewBox="0 0 12 12"><circle cx="6" cy="6" r="6" fill="#e8354a"/><g fill="none" stroke="#fff"><circle cx="6" cy="6" r="4.500"/><circle cx="6" cy="5" r="1.500"/><path d="M3 9q3-3.500 6 0"/></g></svg></button>
    <button class="open" aria-label="Chrome"><svg class="s24"><use href="#i-chrome"/></svg></button>
    <button class="open" aria-label="Chrome red"><svg class="s24"><use href="#i-chrome"/></svg><svg class="badge" viewBox="0 0 12 12"><circle cx="6" cy="6" r="6" fill="#8d1722"/><path d="M1 3.500h10M0 6h12M1 8.500h10" stroke="#4a1015"/><path d="M1 8l10 0" stroke="#d3202f" stroke-width="1.500"/></svg></button>
    <button class="open" aria-label="Chrome C"><svg class="s24"><use href="#i-chrome"/></svg><span class="badge orange">C</span></button>
    <button class="open" aria-label="Keyboard"><svg class="s24" viewBox="0 0 24 24"><rect x="3" y="6" width="21" height="16" rx="1.500" fill="#55606c"/><rect width="16" height="13" rx="1.500" fill="#1db4e2"/><path d="M2.500 4h11M3.500 7h9" stroke="#fff" stroke-width="1.300" stroke-dasharray="1.300 1"/><path d="M4 10h8" stroke="#fff" stroke-width="1.300"/></svg></button>
    <button class="open" aria-label="Notepad"><svg class="s24" viewBox="0 0 24 24"><rect x="3" y="20" width="18" height="4" rx="1" fill="#97511c"/><rect x="3" y="19" width="18" height="2.500" fill="#fff"/><rect x="3" y="1" width="18" height="19" rx="1.500" fill="#4fc0e2"/><path d="M5.500 0v3M9 0v3M12 0v3M15 0v3M18.500 0v3M6 7h12M6 11h12M6 15h12" stroke="#13678c" stroke-width="1.400"/></svg></button>
    <button class="open" aria-label="KakaoTalk"><svg class="s24" viewBox="0 0 24 24"><rect width="24" height="24" rx="2.500" fill="#fae100"/><path d="M12 4c-5 0-9 3.200-9 7.200 0 2.600 1.700 4.800 4.200 6L6.500 20.500l4-2.200c6 .500 10.500-2.700 10.500-7.100C21 7.200 17 4 12 4z" fill="#3a1d1d"/></svg></button>
    <button class="open" aria-label="Excel"><svg class="s24" viewBox="0 0 24 24"><rect x="6" y="1" width="18" height="22" rx="1.500" fill="#185c37"/><path d="M7 1h8v7H6V2z" fill="#21a366"/><path d="M15 1h7.500A1.500 1.500 0 0 1 24 2.500V8h-9z" fill="#33c481"/><path d="M15 8h9v7h-9z" fill="#107c41"/><rect y="6" width="12" height="12" rx="1" fill="#107c41"/><path d="M3.500 8.500l5 7M8.500 8.500l-5 7" stroke="#fff" stroke-width="1.800"/></svg></button>
  </div>
  <div class="clock"><time>3:50 PM</time><time>8/20/2026</time></div>
</footer>
</body>
</html>
```
FILE: styles.css
```css
* { box-sizing: border-box; }
html, body { height: 100%; }
body {
  margin: 0;
  display: flex;
  flex-direction: column;
  overflow: hidden;
  background: #f9fbfd;
  color: #1f1f1f;
  font: 12px/16px Roboto, "Noto Sans", sans-serif;
}
button, input, select {
  font: inherit;
  color: inherit;
  background: none;
  border: 0;
  margin: 0;
  padding: 0;
  outline: 0;
}
button { display: flex; align-items: center; justify-content: center; white-space: nowrap; }
svg { fill: currentColor; flex: none; display: block; }
.line { fill: none; }
.defs { position: absolute; width: 0; height: 0; }
.s6 { width: 4px; height: 6px; }
.s8 { width: 8px; height: 8px; }
.s12 { width: 12px; height: 12px; }
.s14 { width: 14px; height: 14px; }
.s16 { width: 16px; height: 16px; }
.s18 { width: 18px; height: 18px; }
.s24 { width: 24px; height: 24px; }
.faded { opacity: .4; }

/* Browser chrome */
.browser { background: #f4ded4; font-family: "Open Sans", "Noto Sans", sans-serif; }
.tabstrip { height: 40px; display: flex; align-items: center; padding-left: 6px; }
.tab-search { width: 28px; height: 28px; border-radius: 10px; background: #fdece4; }
.browser-tab {
  position: relative;
  align-self: flex-end;
  display: flex;
  align-items: center;
  gap: 8px;
  width: 232px;
  height: 34px;
  margin-left: 6px;
  padding: 0 8px 2px;
  border-radius: 10px 10px 0 0;
  background: #fff8f5;
}
.browser-tab::before, .browser-tab::after {
  content: "";
  position: absolute;
  bottom: 0;
  width: 10px;
  height: 10px;
}
.browser-tab::before { left: -10px; background: radial-gradient(circle at 0 0, transparent 10px, #fff8f5 10px); }
.browser-tab::after { right: -10px; background: radial-gradient(circle at 100% 0, transparent 10px, #fff8f5 10px); }
.browser-title { flex: 1; white-space: nowrap; font: 12px/16px Roboto, sans-serif; }
.tab-close { width: 16px; }
.new-tab { width: 38px; color: #4c4340; }
.window-controls { display: flex; margin-left: auto; }
.window-controls button { width: 46px; height: 40px; }
.navbar {
  display: flex;
  align-items: center;
  height: 47px;
  padding: 0 7px 0 5px;
  background: #fff8f5;
  border-bottom: 1px solid #ecdcd6;
  border-radius: 8px 8px 0 0;
  color: #4c4340;
}
.nav-btn { width: 36px; }
.omnibox {
  flex: 1;
  display: flex;
  align-items: center;
  height: 34px;
  margin-left: 8px;
  padding: 0 8px 0 5px;
  border-radius: 17px;
  background: #eee6e8;
}
.site-info { width: 24px; height: 24px; border-radius: 12px; background: #fff8f5; }
.url { flex: 1; margin-left: 8px; font: 14px/20px Roboto, sans-serif; color: #3d3739; }
.omni-btn { width: 32px; }
.extensions { display: flex; margin-left: 8px; }
.extensions button { width: 36px; height: 32px; }
.amz { position: relative; }
.amz span { width: 16px; height: 16px; border-radius: 2px; background: #1b1b1b; color: #fff; font: bold 13px/13px "Open Sans", sans-serif; }
.amz svg { position: absolute; left: 12px; bottom: 9px; width: 12px; height: 3px; }
.helper { position: relative; }
.off {
  position: absolute;
  left: 7px;
  bottom: 1px;
  width: 22px;
  height: 14px;
  border-radius: 4px;
  background: #fb4438;
  color: #2b1512;
  font: bold 9px/14px "Open Sans", sans-serif;
}
.nav-sep { width: 2px; height: 16px; margin: 0 17px 0 8px; background: #fbd9c9; }
.avatar { border-radius: 50%; background: #00897b; color: #fff; font-family: Roboto, sans-serif; }
.small { width: 20px; height: 20px; font-size: 11px; }
.large { width: 26px; height: 26px; font-size: 15px; font-weight: 500; }
.update { gap: 11px; width: 159px; height: 34px; margin-left: 12px; border-radius: 17px; background: #fcdccc; color: #2f1c14; font: 12px/16px Roboto, sans-serif; }
.dots { width: 4px; height: 14px; }

/* Promotion strip */
.promo { display: flex; align-items: center; height: 45px; padding: 0 14px; gap: 12px; background: #d3e3fd; color: #0842a0; }
.promo p { flex: 1; margin: 0; font-family: Lato, Roboto, sans-serif; }
.promo b { font-weight: 700; }
.promo a { color: inherit; text-decoration: none; font-weight: 500; }
.promo button { margin-left: 14px; }

/* Document header */
.dochead { display: flex; height: 52px; padding: 0 16px 0 14px; color: #444746; }
.logo { width: 26px; height: 20px; margin-top: 16px; }
.doc-info { flex: 1; padding: 8px 0 0 3px; }
.title-row { display: flex; align-items: center; gap: 12px; height: 20px; padding-left: 6px; }
.title-row h1 { margin: 0 2px 0 0; font-size: 15px; line-height: 20px; font-weight: 400; color: #1f1f1f; }
.menus { display: flex; height: 18px; color: #1f1f1f; }
.menus button { padding: 0 6px; }
.doc-actions { display: flex; align-items: center; height: 48px; }
.act { width: 40px; }
.meet { width: 45px; gap: 6px; margin: 0 13px 0 6px; }
.share { display: flex; height: 32px; color: #004a77; font-weight: 500; font-size: 13px; gap: 1px; margin-right: 7px; }
.share button { background: #c2e7ff; }
.share-main { width: 72px; gap: 6px; padding-left: 3px; border-radius: 16px 0 0 16px; }
.share-more { width: 26px; border-radius: 0 16px 16px 0; }
.upgrade { width: 86px; height: 32px; border-radius: 16px; background: #d3e3fd; color: #0842a0; font-size: 12px; font-weight: 500; }
.gem { width: 42px; margin-right: 5px; }
.spark-box { width: 18px; height: 18px; }

/* Editor */
.workspace { flex: 1; min-height: 0; display: flex; }
.editor { flex: 1; min-width: 0; display: flex; flex-direction: column; }
.toolbar {
  flex: none;
  display: flex;
  align-items: center;
  height: 32px;
  margin: 0 13px 7px;
  padding: 0 10px 0 7px;
  border-radius: 16px;
  background: #f0f4f9;
  color: #444746;
}
.toolbar button { flex: none; width: 26px; height: 24px; }
.toolbar .digits { font-size: 10px; }
.finder { display: flex; align-items: center; gap: 7px; width: 80px; height: 22px; padding-left: 6px; border-radius: 11px; background: #fff; }
.finder input { width: 48px; }
.finder input::placeholder { color: #5f6368; opacity: 1; }
.pick { display: flex; align-items: center; justify-content: space-between; }
.pick select { appearance: none; }
.zoom { width: 60px; padding: 0 5px 0 8px; }
.font { width: 78px; padding: 0 8px 0 10px; }
.sep { width: 1px; height: 16px; margin: 0 4px 0 3px; background: #c7c9cc; }
.toolbar .step { width: 18px; }
.size { width: 27px; height: 20px; margin: 0 3px; border: 1px solid #747775; border-radius: 3px; text-align: center; }
.toolbar .merge { width: 38px; gap: 5px; }
.toolbar .combo { width: 32px; gap: 3px; }
.toolbar .collapse { margin-left: auto; }

.formula-bar { flex: none; display: flex; align-items: center; height: 22px; margin-right: 13px; padding-left: 12px; background: #fff; font-size: 11px; }
.namebox { width: 56px; }
.fx { margin: 0 8px 0 20px; font: italic 13px/16px "Liberation Serif", serif; color: #80868b; }
.formula { flex: 1; font: 10px/16px "Liberation Mono", monospace; outline: 0; }
.num { color: #1155cc; }
.ref { color: #f7981d; }
.summarise { gap: 4px; width: 130px; height: 20px; border-radius: 10px; background: #f0f4f9; font-size: 11px; }

.sheet { flex: 1; min-height: 0; display: grid; grid-template: minmax(0, 1fr) 10px / minmax(0, 1fr) 9px; border-top: 1px solid #c0c0c0; }
.viewport { overflow: hidden; background: #f8faf7; }
.grid { table-layout: fixed; width: 1164px; border-collapse: separate; border-spacing: 0; font: 11px/16px "Liberation Sans", Arial, sans-serif; color: #000; }
.c-num { width: 37px; }
.c-a { width: 227px; }
.c-s { width: 81px; }
.c-l { width: 96px; }
.grid th, .grid td { height: 17px; padding: 0 0 0 1px; background: #fff; border: solid #e1e1e1; border-width: 0 1px 1px 0; text-align: center; white-space: nowrap; }
.grid th { border-color: #c0c0c0; font-size: 10px; line-height: 14px; font-weight: 400; color: #444746; vertical-align: top; }
.grid thead th { position: relative; height: 19px; line-height: 18px; }
.grid thead .corner { background: #f8f9fa; }
.grid td:nth-child(2) { padding-left: 3px; text-align: left; font-weight: 700; border-right: 3px solid #c0c0c0; }
.grid thead th:nth-child(2) { border-right: 3px solid #c0c0c0; }
.grid .on { background: #d3e3fd; color: #041e49; font-weight: 700; }
.grid thead svg { position: absolute; top: 7px; }
.hide-left svg { right: 4px; }
.hide-right svg { left: 4px; }
.grid thead .on svg { right: 7px; top: 6px; color: #5f6368; }
.frozen th, .frozen td { font-weight: 700; }
.grid .frozen th, .grid .frozen td { height: 20px; border-bottom: 4px solid #c0c0c0; }
.grid .frozen th { font-weight: 400; }
.grid .brand td { height: 49px; background: #000; color: #fff; border-bottom-color: #000; border-right-color: #060606; font-size: 15px; }
.grid .brand td:nth-child(2) { padding-top: 2px; border-right-color: #c0c0c0; }
.grid .brand th { vertical-align: middle; line-height: 20px; }
.grid .section td:nth-child(2) { background: #000; color: #fff; border-bottom-color: #000; }
.grid .active { position: relative; }
.active::before { content: ""; position: absolute; inset: -1px; border: 2px solid #2b6de5; border-top-width: 1px; border-left-width: 1px; }
.active::after { content: ""; position: absolute; z-index: 1; right: -4px; bottom: -4px; width: 6px; height: 6px; border-radius: 50%; background: #0b57d0; }

.vscroll { display: flex; flex-direction: column; border-left: 1px solid #c0c0c0; background: #fff; }
.vfrozen { height: 39px; background: #f8f8f8; border-bottom: 4px solid #dde3ea; }
.vthumb { width: 7px; height: 27px; margin-top: 1px; border-radius: 4px; background: #dadce0; }
.varrows { margin-top: auto; color: #80868b; }
.varrows svg { width: 8px; height: 13px; padding: 4px 1px 5px; border-top: 1px solid #c0c0c0; }
.hscroll { display: flex; border: solid #c0c0c0; border-width: 1px 0; background: #fff; }
.hfrozen { width: 264px; background: #f8f8f8; border-right: 4px solid #dde3ea; }
.htrack { flex: 1; }
.harrows { display: flex; color: #80868b; }
.harrows svg { width: 12px; height: 8px; padding: 1px 3px 1px 4px; border-left: 1px solid #c0c0c0; }
.scroll-corner { border: solid #c0c0c0; border-width: 1px 0 1px 1px; background: #f8f8f8; }

.sheet-tabs { flex: none; display: flex; height: 29px; padding-left: 33px; color: #444746; font-weight: 500; }
.tool { width: 32px; }
.tabs { display: flex; margin-left: 10px; }
.tabs button { gap: 10px; padding: 2px 11px 0; }
.current { background: #dde3ea; color: #0b57d0; font-weight: 700; }

/* Side panel */
.side-panel { flex: none; display: flex; flex-direction: column; align-items: center; width: 45px; padding-top: 1px; }
.side-panel button { width: 36px; height: 32px; margin-bottom: 13px; }
.side-panel hr { width: 16px; margin: 6px 0 19px; border: 0; border-top: 1px solid #dadce0; }
.cal { position: relative; }
.cal span { position: absolute; inset: 0; line-height: 32px; color: #fff; font-size: 8px; text-align: center; }
.side-panel .panel-toggle { height: 28px; margin: auto 0 8px; }

/* Taskbar */
.taskbar {
  flex: none;
  display: grid;
  grid-template-columns: 1fr auto 1fr;
  height: 48px;
  border-top: 1px solid #aab2bd;
  background: linear-gradient(90deg, #e3eff7 0, #e3eef8 18%, #d2e2fa 23%, #d6dcf6 29%, #d6e0f6 45%, #d5dcf5 65%, #dde8f8 82%, #e1eef8 100%);
  font-family: "Open Sans", "Noto Sans", sans-serif;
}
.apps { grid-column: 2; display: flex; align-items: flex-start; padding-left: 2px; }
.apps button { position: relative; width: 44px; height: 46px; }
.open::after { content: ""; position: absolute; bottom: 4px; left: 19px; width: 6px; height: 3px; border-radius: 2px; background: #7d8594; }
.focused::before { content: ""; position: absolute; inset: 4px 3px; border-radius: 4px; background: #eef3fd; box-shadow: 0 0 1px #98a2b8; }
.focused svg { position: relative; }
.focused::after { left: 14px; width: 16px; background: #0078d4; }
.badge { position: absolute; top: 11px; right: 9px; width: 12px; height: 12px; border-radius: 50%; color: #fff; font: 8px/12px Roboto, sans-serif; }
.open .badge { position: absolute; }
.teal { background: #0b8372; }
.blue { background: #0b87d8; }
.brown { background: #8d6e63; }
.orange { background: #ef6c00; }
.clock { display: flex; flex-direction: column; align-items: flex-end; justify-content: center; padding: 0 19px 2px 0; font-size: 12px; line-height: 16px; color: #1b1b1b; }
```
